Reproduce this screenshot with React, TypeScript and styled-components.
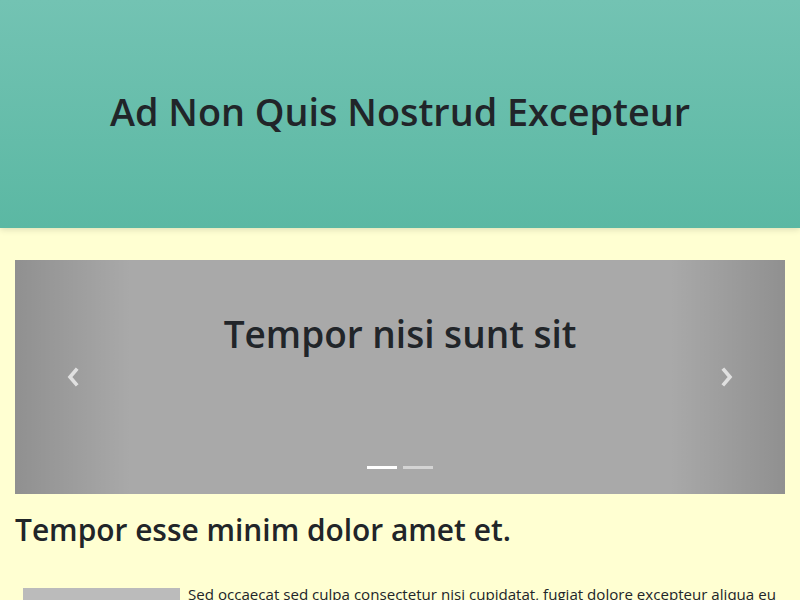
import React from "react";
import styled, { createGlobalStyle } from "styled-components";

const Global = createGlobalStyle`
  html, body { margin: 0; padding: 0; }
  body {
    background: #ffffd2;
    font-family: "Open Sans", "Noto Sans", sans-serif;
    color: #212529;
    overflow: hidden;
  }
  * { box-sizing: border-box; }
`;

const Header = styled.header`
  height: 228px;
  background: linear-gradient(to bottom, #73c3b3, #5bb8a3);
  box-shadow: 0 2px 6px rgba(0, 0, 0, 0.12);
  display: flex;
  align-items: center;
  justify-content: center;
  position: relative;
  z-index: 1;
`;

const Title = styled.h1`
  margin: 0;
  font-size: 37.8px;
  font-weight: 600;
  line-height: 1.2;
  padding-bottom: 5px;
`;

const Main = styled.main`
  padding: 32px 15px 0;
`;

const Carousel = styled.section`
  position: relative;
  height: 234px;
  background: #a9a9a9;
  display: flex;
  flex-direction: column;
  align-items: center;
  overflow: hidden;
`;

const SlideTitle = styled.h2`
  margin: 52px 0 0;
  font-size: 37px;
  font-weight: 600;
  line-height: 1.2;
`;

const Control = styled.button<{ $side: "left" | "right" }>`
  position: absolute;
  top: 0;
  bottom: 0;
  ${(p) => p.$side}: 0;
  width: 15%;
  border: 0;
  padding: 0;
  display: flex;
  align-items: center;
  justify-content: center;
  color: #e0e0e0;
  background: linear-gradient(
    to ${(p) => (p.$side === "left" ? "right" : "left")},
    rgba(0, 0, 0, 0.15),
    rgba(0, 0, 0, 0)
  );
  cursor: pointer;
`;

const Indicators = styled.ol`
  position: absolute;
  bottom: 25px;
  left: 0;
  right: 0;
  margin: 0;
  padding: 0;
  list-style: none;
  display: flex;
  justify-content: center;
  gap: 6px;
`;

const Dot = styled.li<{ $active?: boolean }>`
  width: 30px;
  height: 3px;
  background: ${(p) => (p.$active ? "#ffffff" : "rgba(255,255,255,0.5)")};
`;

const Heading = styled.h2`
  margin: 18px 0 0;
  font-size: 29.9px;
  font-weight: 600;
  line-height: 1.2;
`;

const Media = styled.div`
  display: flex;
  gap: 8px;
  padding: 0 8px;
  margin-top: 34px;
`;

const Thumb = styled.div`
  flex: 0 0 157px;
  height: 120px;
  margin-top: 6px;
  background: #bbbbbb;
`;

const Para = styled.p`
  margin: 0;
  font-size: 15.1px;
  line-height: 24px;
`;

const Chevron = ({ dir }: { dir: "left" | "right" }) => (
  <svg width="14" height="20" viewBox="0 0 14 20">
    <path
      d={dir === "left" ? "M10 3 L4 10 L10 17" : "M4 3 L10 10 L4 17"}
      fill="none"
      stroke="currentColor"
      strokeWidth="3.6"
      strokeLinecap="square"
      strokeLinejoin="miter"
    />
  </svg>
);

export default function App() {
  return (
    <>
      <Global />
      <Header>
        <Title>Ad Non Quis Nostrud Excepteur</Title>
      </Header>
      <Main>
        <Carousel>
          <SlideTitle>Tempor nisi sunt sit</SlideTitle>
          <Control $side="left" aria-label="Previous">
            <Chevron dir="left" />
          </Control>
          <Control $side="right" aria-label="Next">
            <Chevron dir="right" />
          </Control>
          <Indicators>
            <Dot $active />
            <Dot />
          </Indicators>
        </Carousel>
        <Heading>Tempor esse minim dolor amet et.</Heading>
        <Media>
          <Thumb />
          <Para>
            Sed occaecat sed culpa consectetur nisi cupidatat, fugiat dolore excepteur aliqua eu
            ullamco. Lorem ipsum officia veniam sint deserunt magna ad irure.
          </Para>
        </Media>
      </Main>
    </>
  );
}
